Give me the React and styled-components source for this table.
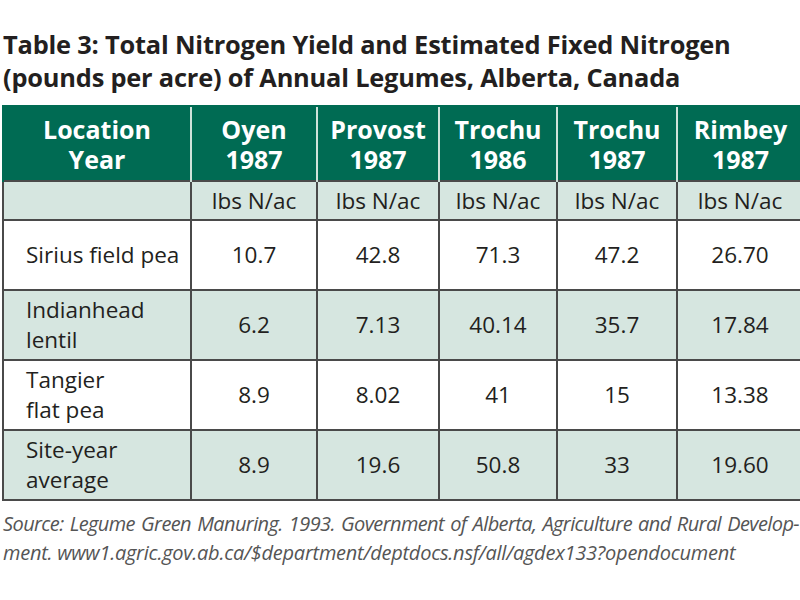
import styled, { createGlobalStyle } from "styled-components";

const GlobalStyle = createGlobalStyle`
  html, body {
    margin: 0;
    padding: 0;
    background: #ffffff;
    overflow: hidden;
  }
  body {
    font-family: "Open Sans", "Noto Sans", sans-serif;
    color: #231f20;
  }
`;

const Page = styled.div`
  width: 800px;
  height: 600px;
  padding-top: 28px;
  box-sizing: border-box;
`;

const Title = styled.h1`
  margin: 0 0 0 3px;
  font-size: 25.4px;
  line-height: 33px;
  font-weight: 700;
  letter-spacing: -0.2px;
  color: #231f20;
`;

const Table = styled.table`
  margin: 11px 0 0 2px;
  width: 800px;
  border-collapse: collapse;
  table-layout: fixed;
`;

const HeadCell = styled.th`
  background: #006b53;
  color: #ffffff;
  font-size: 25px;
  font-weight: 700;
  line-height: 30px;
  height: 73px;
  padding: 0;
  text-align: center;
  vertical-align: middle;
  border-left: 2px solid #cfe2da;
  border-top: 2px solid #006b53;
  &:first-child {
    border-left: 2px solid #006b53;
  }
`;

const Row = styled.tr`
  background: ${(p) => (p.$shade ? "#d6e6e0" : "#ffffff")};
`;

const Cell = styled.td`
  border: 2px solid #4a4a4a;
  height: ${(p) => p.$h}px;
  padding: ${(p) => (p.$label ? "0 0 0 22px" : "0")};
  text-align: ${(p) => (p.$label ? "left" : "center")};
  vertical-align: middle;
  font-size: 22.5px;
  line-height: 30px;
  color: #231f20;
  box-sizing: border-box;
`;

const Source = styled.div`
  margin: 8px 0 0 3px;
  width: 796px;
  font-style: italic;
  font-weight: 400;
  font-size: 20px;
  line-height: 29px;
  color: #555555;
  letter-spacing: -0.25px;
`;

const JustLine = styled.span`
  display: block;
  white-space: nowrap;
  letter-spacing: -0.6px;
  word-spacing: -3px;
  text-align: justify;
  text-align-last: justify;
`;

const PlainLine = styled.span`
  display: block;
  white-space: nowrap;
`;

const columns = [
  ["Location", "Year"],
  ["Oyen", "1987"],
  ["Provost", "1987"],
  ["Trochu", "1986"],
  ["Trochu", "1987"],
  ["Rimbey", "1987"],
];

const widths = [188, 126, 122, 118, 120, 126];

const rows = [
  { label: ["Sirius field pea"], values: ["10.7", "42.8", "71.3", "47.2", "26.70"] },
  { label: ["Indianhead", "lentil"], values: ["6.2", "7.13", "40.14", "35.7", "17.84"] },
  { label: ["Tangier", "flat pea"], values: ["8.9", "8.02", "41", "15", "13.38"] },
  { label: ["Site-year", "average"], values: ["8.9", "19.6", "50.8", "33", "19.60"] },
];

const App = () => {
  return (
    <Page>
      <GlobalStyle />
      <Title>
        Table 3: Total Nitrogen Yield and Estimated Fixed Nitrogen
        <br />
        (pounds per acre) of Annual Legumes, Alberta, Canada
      </Title>
      <Table>
        <colgroup>
          {widths.map((w, i) => (
            <col key={i} style={{ width: w }} />
          ))}
        </colgroup>
        <thead>
          <tr>
            {columns.map((c, i) => (
              <HeadCell key={i}>
                {c[0]}
                <br />
                {c[1]}
              </HeadCell>
            ))}
          </tr>
        </thead>
        <tbody>
          <Row $shade>
            <Cell $h={39} />
            {columns.slice(1).map((c, i) => (
              <Cell key={i} $h={39}>
                lbs N/ac
              </Cell>
            ))}
          </Row>
          {rows.map((r, i) => (
            <Row key={i} $shade={i % 2 === 1}>
              <Cell $label $h={70}>
                {r.label.map((l, j) => (
                  <span key={j}>
                    {j > 0 && <br />}
                    {l}
                  </span>
                ))}
              </Cell>
              {r.values.map((v, j) => (
                <Cell key={j} $h={70}>
                  {v}
                </Cell>
              ))}
            </Row>
          ))}
        </tbody>
      </Table>
      <Source>
        <JustLine>
          Source: Legume Green Manuring. 1993. Government of Alberta, Agriculture and Rural Develop-
        </JustLine>
        <PlainLine>ment. www1.agric.gov.ab.ca/$department/deptdocs.nsf/all/agdex133?opendocument</PlainLine>
      </Source>
    </Page>
  );
};

export default App;
